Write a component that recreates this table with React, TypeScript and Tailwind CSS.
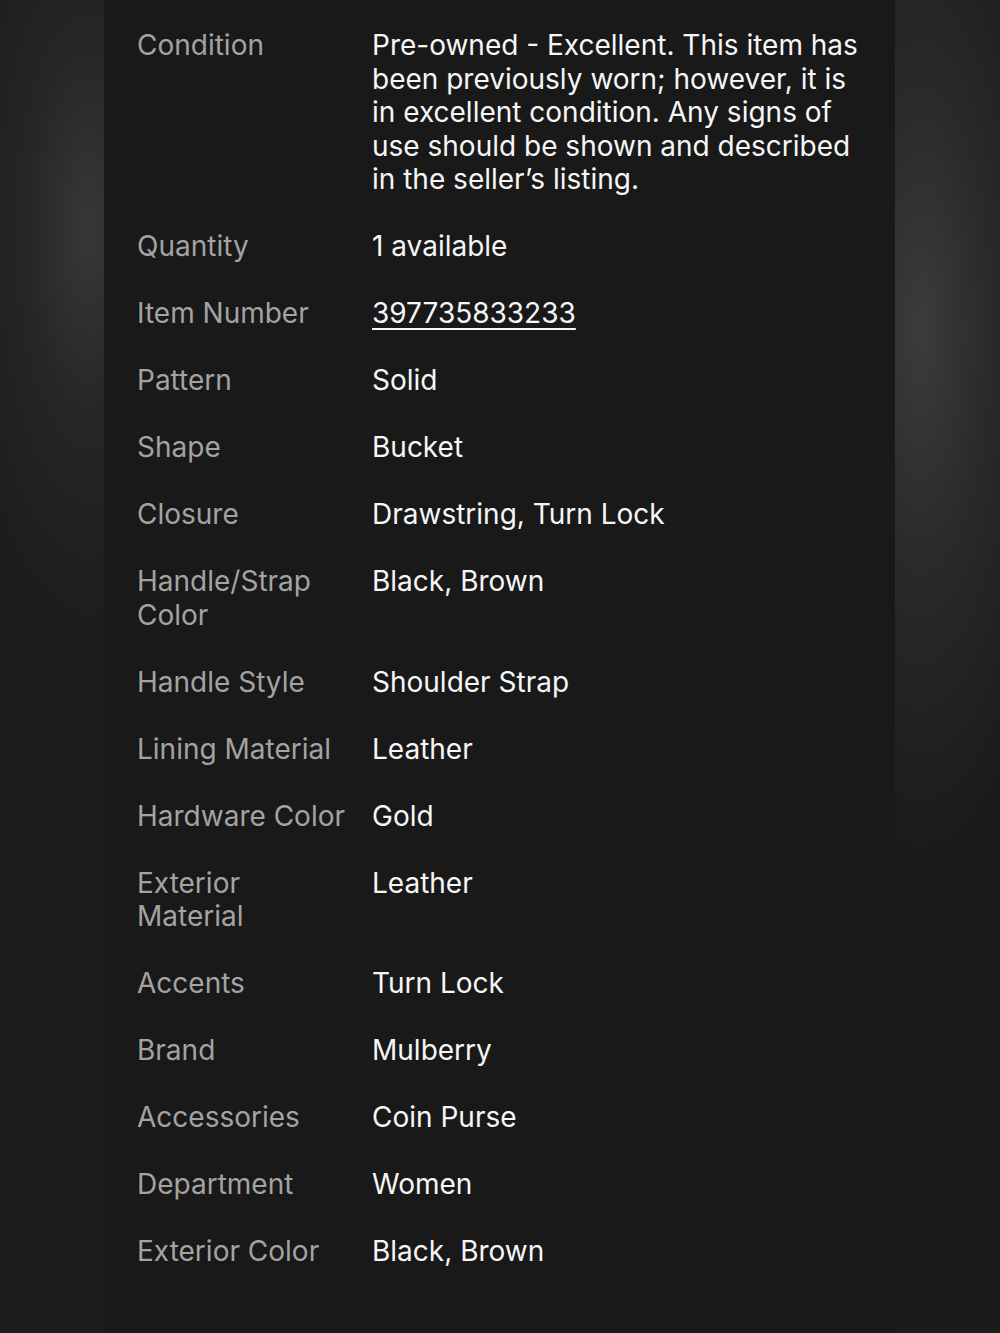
const specs: { label: string; value: string; link?: boolean }[] = [
  {
    label: "Condition",
    value:
      "Pre-owned - Excellent. This item has been previously worn; however, it is in excellent condition. Any signs of use should be shown and described in the seller\u2019s listing.",
  },
  { label: "Quantity", value: "1 available" },
  { label: "Item Number", value: "397735833233", link: true },
  { label: "Pattern", value: "Solid" },
  { label: "Shape", value: "Bucket" },
  { label: "Closure", value: "Drawstring, Turn Lock" },
  { label: "Handle/Strap Color", value: "Black, Brown" },
  { label: "Handle Style", value: "Shoulder Strap" },
  { label: "Lining Material", value: "Leather" },
  { label: "Hardware Color", value: "Gold" },
  { label: "Exterior Material", value: "Leather" },
  { label: "Accents", value: "Turn Lock" },
  { label: "Brand", value: "Mulberry" },
  { label: "Accessories", value: "Coin Purse" },
  { label: "Department", value: "Women" },
  { label: "Exterior Color", value: "Black, Brown" },
];

export default function App() {
  return (
    <div className="flex h-[1333px] w-[1000px] overflow-hidden bg-[#1b1b1b] font-['Inter',_'Liberation_Sans',_sans-serif]">
      <div className="w-[104px] shrink-0 bg-[radial-gradient(ellipse_140px_420px_at_85%_230px,#383838_0%,#262626_45%,#1c1c1c_100%)]" />
      <div className="w-[791px] shrink-0 bg-[#191919] pl-[33px] pr-[30px] pt-[29px]">
        <dl className="grid grid-cols-[212px_1fr] gap-x-[23px] gap-y-[33.4px] text-[28px] leading-[33.6px]">
          {specs.map((s) => (
            <div key={s.label} className="contents">
              <dt className="text-[#a3a3a3]">{s.label}</dt>
              <dd className="text-[#f6f6f6]">
                {s.link ? (
                  <span className="underline decoration-2 underline-offset-[5px]">{s.value}</span>
                ) : (
                  s.value
                )}
              </dd>
            </div>
          ))}
        </dl>
      </div>
      <div className="w-[105px] shrink-0 bg-[radial-gradient(ellipse_150px_520px_at_25%_330px,#3c3c3c_0%,#2a2a2a_45%,#1b1b1b_100%)]" />
    </div>
  );
}
